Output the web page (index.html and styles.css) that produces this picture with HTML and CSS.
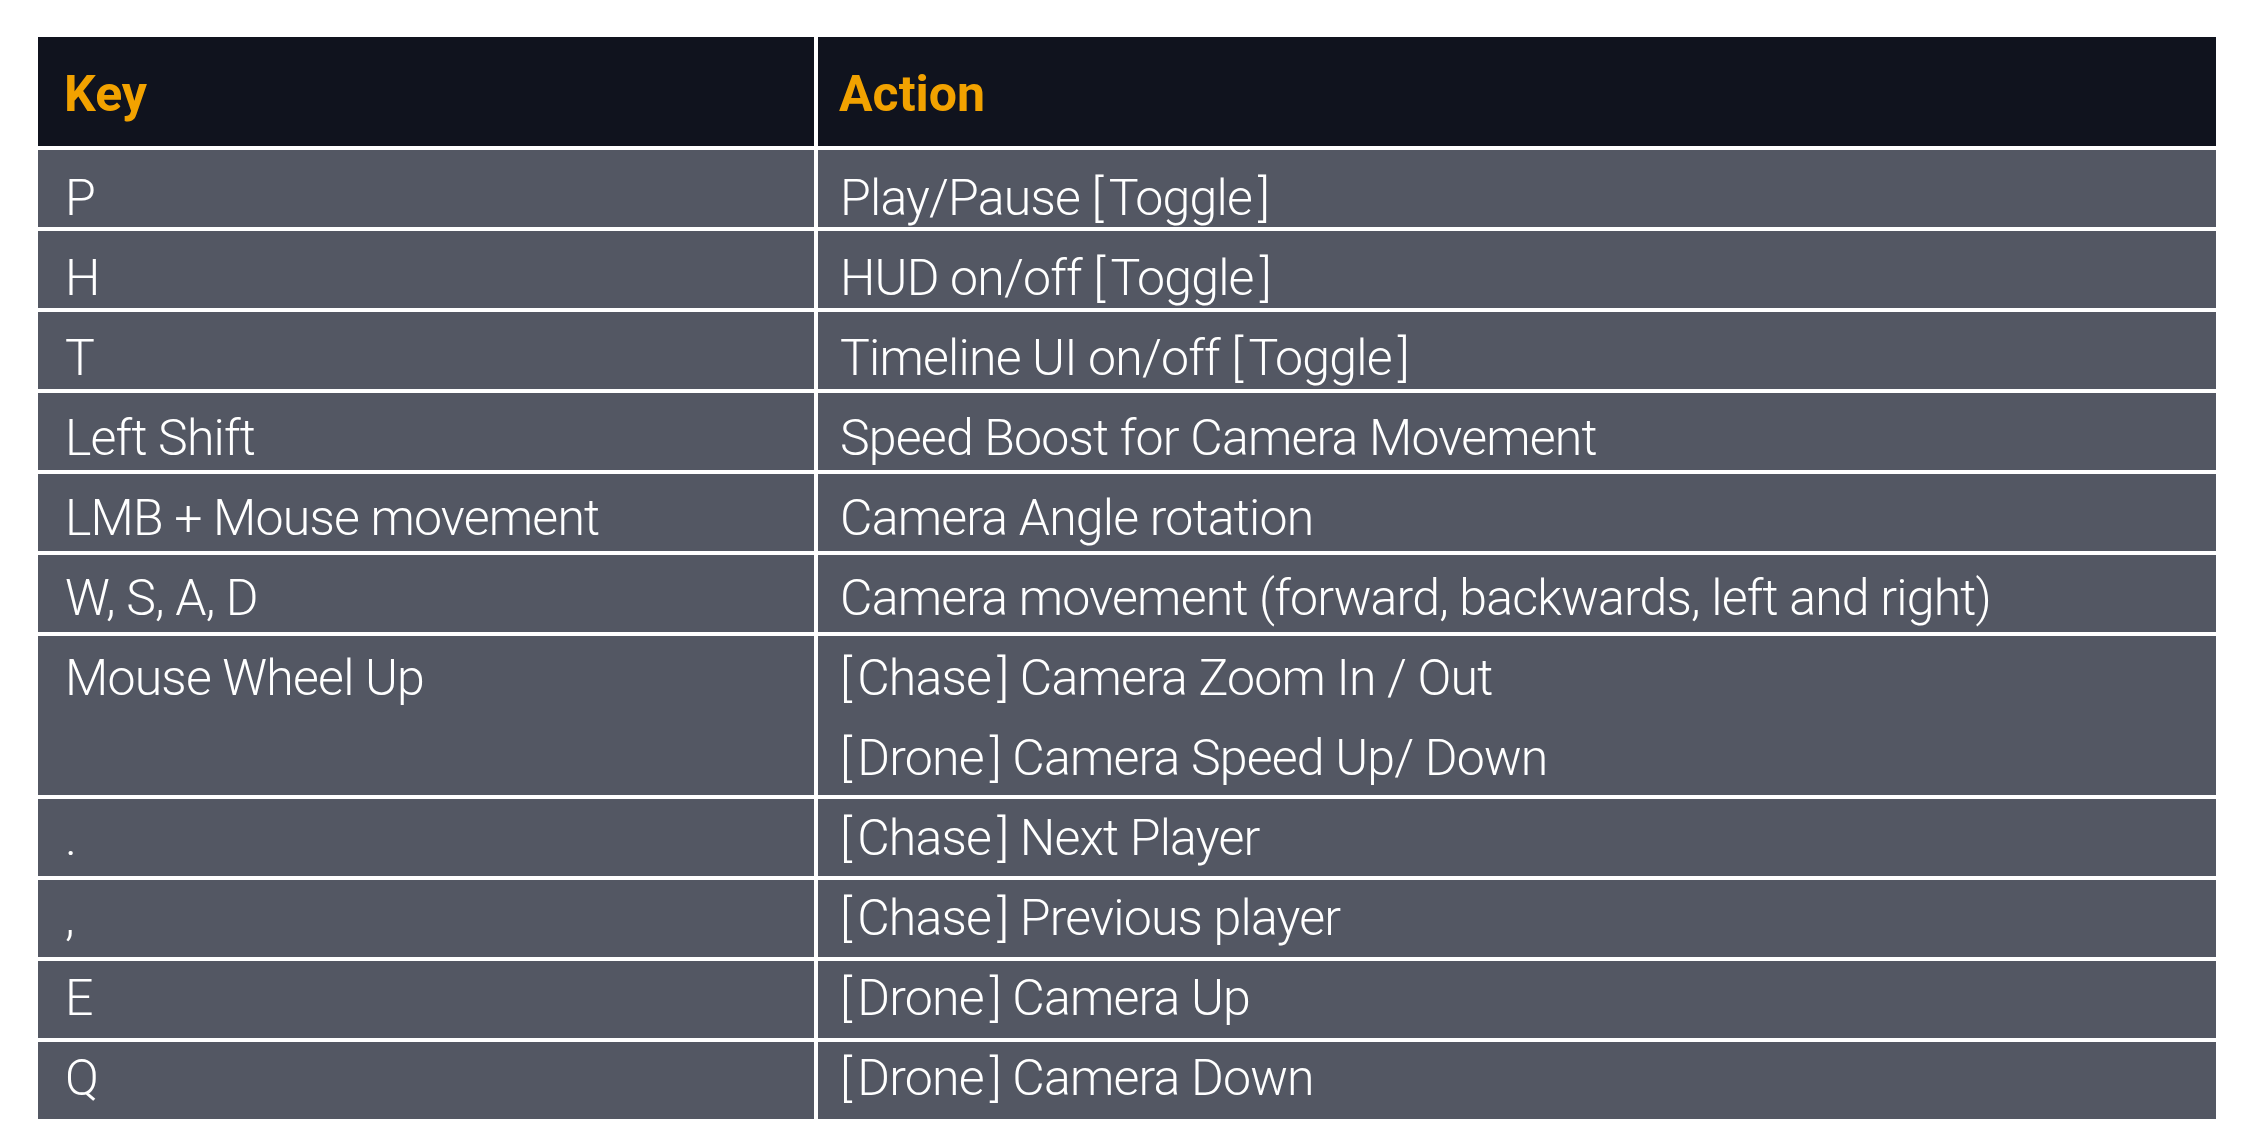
FILE: index.html
```html
<!DOCTYPE html>
<html lang="en">
<head>
<meta charset="utf-8">
<title>Controls</title>
<link rel="stylesheet" href="styles.css">
</head>
<body>
<div class="table">
  <div class="row head">
    <div class="cell key"><div class="line">Key</div></div>
    <div class="cell action"><div class="line">Action</div></div>
  </div>
  <div class="row">
    <div class="cell key"><div class="line">P</div></div>
    <div class="cell action"><div class="line">Play/Pause [<span class="tag">Toggle</span>]</div></div>
  </div>
  <div class="row">
    <div class="cell key"><div class="line">H</div></div>
    <div class="cell action"><div class="line">HUD on/off [<span class="tag">Toggle</span>]</div></div>
  </div>
  <div class="row">
    <div class="cell key"><div class="line">T</div></div>
    <div class="cell action"><div class="line">Timeline UI on/off [<span class="tag">Toggle</span>]</div></div>
  </div>
  <div class="row">
    <div class="cell key"><div class="line">Left Shift</div></div>
    <div class="cell action"><div class="line">Speed Boost for Camera Movement</div></div>
  </div>
  <div class="row">
    <div class="cell key"><div class="line">LMB + Mouse movement</div></div>
    <div class="cell action"><div class="line">Camera Angle rotation</div></div>
  </div>
  <div class="row">
    <div class="cell key"><div class="line">W, S, A, D</div></div>
    <div class="cell action"><div class="line">Camera movement (forward, backwards, left and right)</div></div>
  </div>
  <div class="row tall">
    <div class="cell key"><div class="line">Mouse Wheel Up</div></div>
    <div class="cell action"><div class="line">[<span class="tag">Chase</span>] Camera Zoom In / Out</div><div class="line">[<span class="tag">Drone</span>] Camera Speed Up/ Down</div></div>
  </div>
  <div class="row">
    <div class="cell key"><div class="line">.</div></div>
    <div class="cell action"><div class="line">[<span class="tag">Chase</span>] Next Player</div></div>
  </div>
  <div class="row">
    <div class="cell key"><div class="line">,</div></div>
    <div class="cell action"><div class="line">[<span class="tag">Chase</span>] Previous player</div></div>
  </div>
  <div class="row">
    <div class="cell key"><div class="line">E</div></div>
    <div class="cell action"><div class="line">[<span class="tag">Drone</span>] Camera Up</div></div>
  </div>
  <div class="row">
    <div class="cell key"><div class="line">Q</div></div>
    <div class="cell action"><div class="line">[<span class="tag">Drone</span>] Camera Down</div></div>
  </div>
</div>
</body>
</html>
```

FILE: styles.css
```css
html, body {
  margin: 0;
  padding: 0;
  background: #ffffff;
}

body {
  font-family: Roboto, "Liberation Sans", sans-serif;
  font-weight: 300;
  font-size: 50px;
  color: #ffffff;
}

.table {
  display: flex;
  flex-direction: column;
  gap: 4px;
  width: 2178px;
  margin: 37px 0 0 38px;
}

.row {
  display: flex;
  gap: 4px;
  height: 77px;
}

.row.head {
  height: 109px;
}

.row.tall {
  height: 159px;
}

.cell {
  background: #535763;
  box-sizing: border-box;
  white-space: nowrap;
  letter-spacing: -0.8px;
}

.cell.key {
  flex: 0 0 776px;
  padding-left: 27px;
}

.cell.action {
  flex: 1 1 auto;
  padding-left: 22px;
}

.line {
  line-height: 56px;
}

.line + .line {
  margin-top: 24px;
}

.tag {
  display: inline-block;
  margin: 0 6px;
}

.head .cell {
  background: #10131e;
  color: #f2a200;
  font-weight: 700;
  letter-spacing: 0;
  padding-top: 29px;
}

.head .cell.key {
  padding-left: 26px;
}

.head .cell.action {
  padding-left: 21px;
}

.row:nth-child(2) .cell { padding-top: 20px; }
.row:nth-child(3) .cell { padding-top: 19px; }
.row:nth-child(4) .cell { padding-top: 18px; }
.row:nth-child(5) .cell { padding-top: 17px; }
.row:nth-child(6) .cell { padding-top: 16px; }
.row:nth-child(7) .cell { padding-top: 15px; }
.row:nth-child(8) .cell { padding-top: 14px; }
.row:nth-child(9) .cell { padding-top: 11px; }
.row:nth-child(10) .cell { padding-top: 10px; }
.row:nth-child(11) .cell { padding-top: 9px; }
.row:nth-child(12) .cell { padding-top: 8px; }
```
